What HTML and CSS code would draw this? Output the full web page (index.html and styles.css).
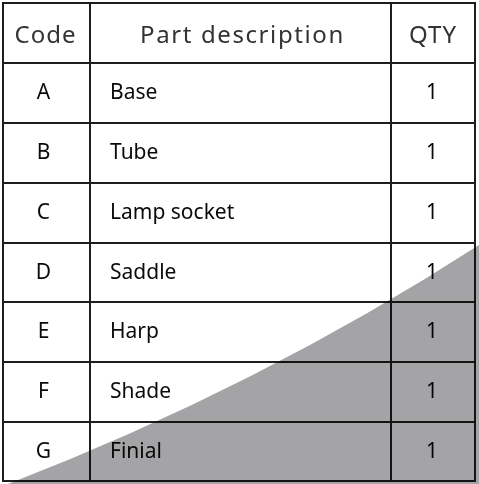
FILE: index.html
```html
<!DOCTYPE html>
<html>
<head>
<meta charset="utf-8">
<link rel="stylesheet" href="styles.css">
</head>
<body>
<table class="parts">
  <colgroup>
    <col class="c-code">
    <col class="c-desc">
    <col class="c-qty">
  </colgroup>
  <thead>
    <tr class="r-head">
      <th class="code">Code</th>
      <th class="desc">Part description</th>
      <th class="qty">QTY</th>
    </tr>
  </thead>
  <tbody>
    <tr class="r60"><td class="code">A</td><td class="desc">Base</td><td class="qty">1</td></tr>
    <tr class="r60"><td class="code">B</td><td class="desc">Tube</td><td class="qty">1</td></tr>
    <tr class="r60"><td class="code">C</td><td class="desc">Lamp socket</td><td class="qty">1</td></tr>
    <tr class="r59"><td class="code">D</td><td class="desc">Saddle</td><td class="qty">1</td></tr>
    <tr class="r60"><td class="code">E</td><td class="desc">Harp</td><td class="qty">1</td></tr>
    <tr class="r60"><td class="code">F</td><td class="desc">Shade</td><td class="qty">1</td></tr>
    <tr class="r59"><td class="code">G</td><td class="desc">Finial</td><td class="qty">1</td></tr>
  </tbody>
</table>
<svg class="curl" width="479" height="484" viewBox="0 0 479 484">
  <path d="M 8 484 Q 259 387 479 245 L 479 484 Z"/>
</svg>
</body>
</html>
```
FILE: styles.css
```css
html, body {
  margin: 0;
  padding: 0;
  background: #ffffff;
  width: 479px;
  height: 484px;
  overflow: hidden;
}
body {
  position: relative;
  font-family: "Noto Sans", "Open Sans", sans-serif;
  color: #0a0a0a;
}
.parts {
  margin: 2px 0 0 2px;
  border-collapse: separate;
  border-spacing: 0;
  table-layout: fixed;
  width: 474px;
  border-left: 2px solid #1e1e1e;
  border-top: 2px solid #1e1e1e;
}
.c-code { width: 87px; }
.c-desc { width: 301px; }
.c-qty { width: 84px; }
.parts th,
.parts td {
  box-sizing: border-box;
  border-right: 2px solid #1e1e1e;
  border-bottom: 2px solid #1e1e1e;
  padding: 0;
  vertical-align: middle;
  white-space: nowrap;
}
.r-head { height: 60px; }
.r60 { height: 60px; }
.r59 { height: 59px; }
.parts th {
  font-size: 24px;
  font-weight: 400;
  color: #333333;
  letter-spacing: 1.6px;
  padding-bottom: 0;
}
.parts th.code { text-align: center; letter-spacing: 1px; padding-right: 2px; }
.parts th.desc { text-align: center; padding-left: 4px; }
.parts th.qty { text-align: center; letter-spacing: 1px; }
.parts td {
  font-size: 21px;
  line-height: 28px;
  padding-bottom: 4px;
}
.parts td.code { text-align: center; padding-right: 6px; }
.parts td.desc { text-align: left; padding-left: 19px; }
.parts td.qty { text-align: center; padding-right: 2px; }
.curl {
  position: absolute;
  left: 0;
  top: 0;
  pointer-events: none;
  mix-blend-mode: multiply;
}
.curl path { fill: #a4a3a5; }
```
